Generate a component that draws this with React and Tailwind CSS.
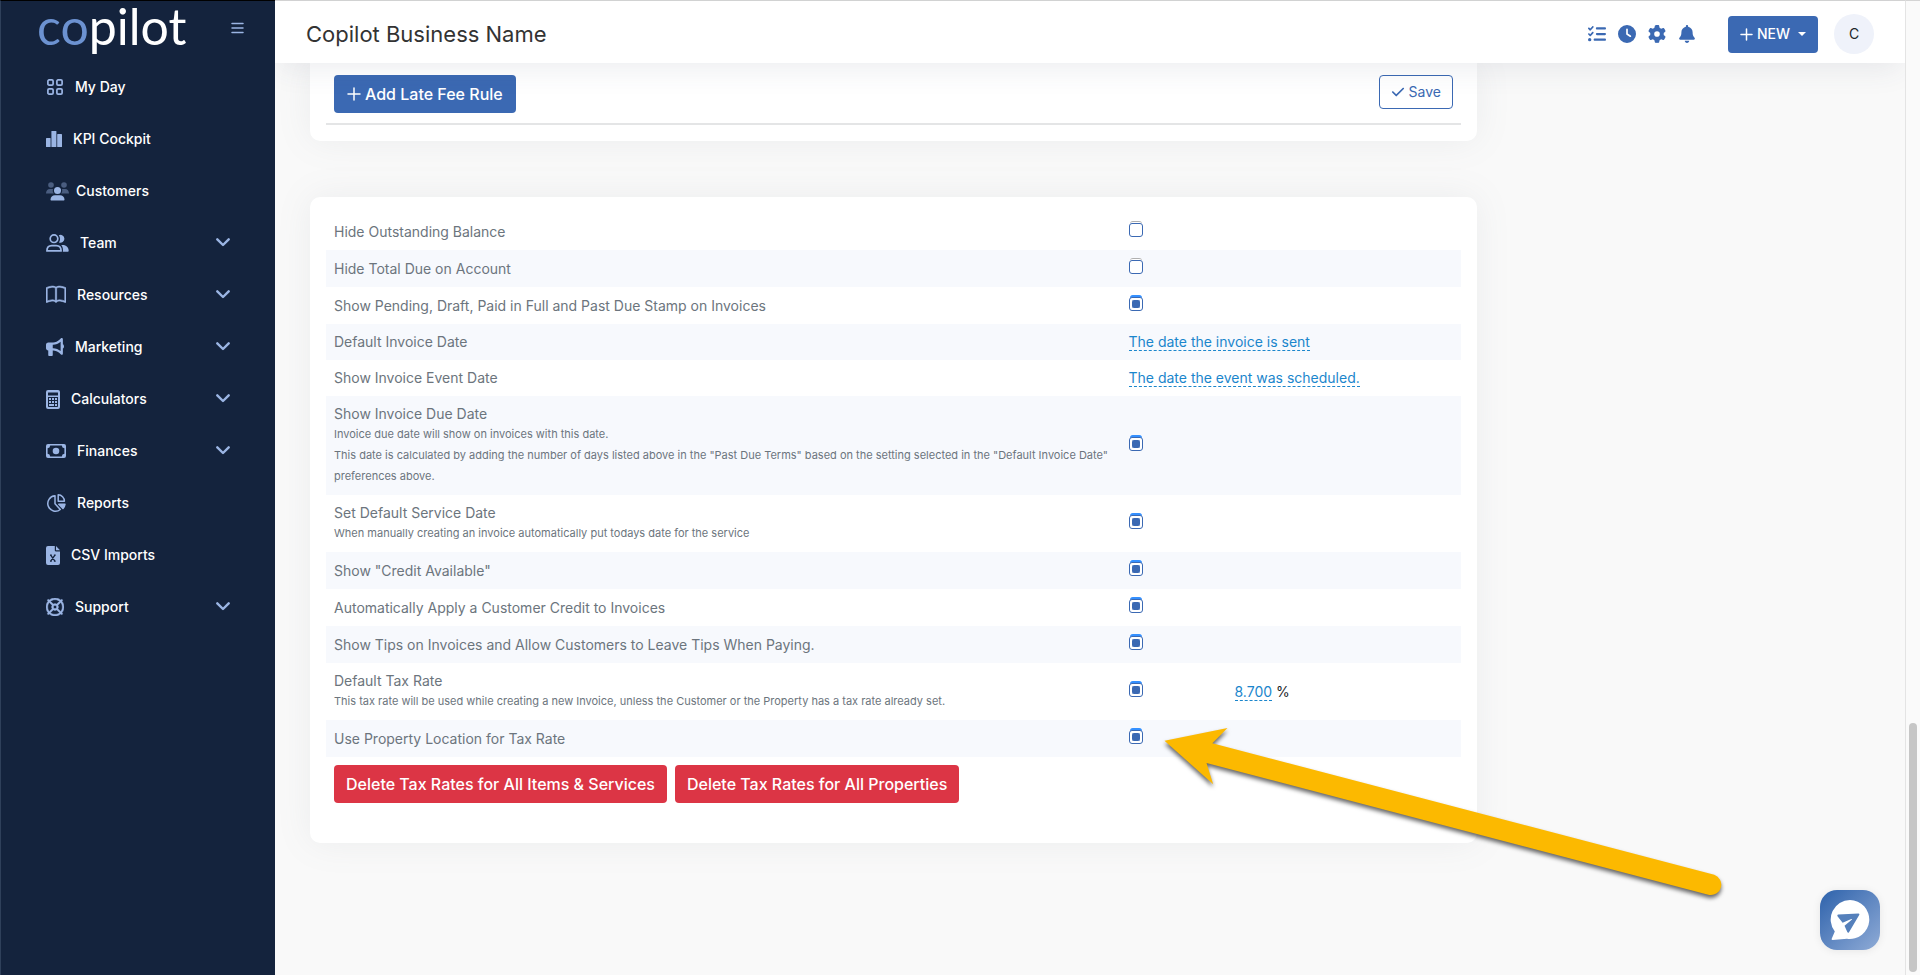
import { FaBell, FaCheck, FaClock, FaListCheck, FaGear, FaBullhorn, FaRegLifeRing } from "react-icons/fa6";
import { BsBook } from "react-icons/bs";

function GridIcon() {
  return (
    <svg width="18" height="18" viewBox="0 0 18 18" fill="none" stroke="currentColor" strokeWidth="1.700">
      <rect x="1.900" y="1.900" width="5.200" height="5.200" rx="1.200" />
      <rect x="10.900" y="1.900" width="5.200" height="5.200" rx="1.200" />
      <rect x="1.900" y="10.900" width="5.200" height="5.200" rx="1.200" />
      <rect x="10.900" y="10.900" width="5.200" height="5.200" rx="1.200" />
    </svg>
  );
}

function BarsIcon() {
  return (
    <svg width="16" height="18" viewBox="0 0 16 18" fill="currentColor">
      <rect x="0" y="8" width="4.6" height="9" rx="0.6" />
      <rect x="5.4" y="1" width="5" height="16" rx="0.6" />
      <rect x="11.2" y="4" width="4.8" height="13" rx="0.6" />
    </svg>
  );
}

function CustomersIcon() {
  return (
    <svg className="-mr-1" width="23" height="19" viewBox="0 0 23 19" fill="currentColor">
      <g opacity="0.4">
        <circle cx="5" cy="3" r="2.8" />
        <circle cx="18" cy="3" r="2.8" />
        <path d="M0 11.5C0 9 1.5 7 4 7h3c-.6 2 0 3.600 1 4.500H.5a.5.5 0 0 1-.5-.5zM23 11.500C23 9 21.500 7 19 7h-3c.6 2 0 3.600-1 4.500h7.500a.5.5 0 0 0 .5-.5z" />
      </g>
      <circle cx="11.500" cy="8.500" r="3.500" />
      <path d="M4.500 17.500c0-2.700 2-4.300 4.500-4.300h5c2.500 0 4.500 1.600 4.500 4.300 0 .6-.4 1-1 1h-12c-.6 0-1-.4-1-1z" />
    </svg>
  );
}

function TeamIcon() {
  return (
    <svg width="23" height="18" viewBox="0 0 23 18" fill="none" stroke="currentColor" strokeWidth="1.7">
      <circle cx="8" cy="4.700" r="3.800" />
      <path d="M.9 16.900c0-3.400 2-5.200 4.900-5.200h4.400c2.900 0 4.900 1.800 4.900 5.200z" strokeLinejoin="round" />
      <path d="M12.800 1.300A3.900 3.900 0 1 1 13 8.400a6.500 6.500 0 0 0-.2-7.100zM15.200 11h1.500c3.600 0 6 2.600 6 5.700 0 .7-.5 1.100-1.200 1.100h-4.700c.5-2.800-.1-5.100-1.600-6.800z" fill="currentColor" stroke="none" />
    </svg>
  );
}

function CalculatorIcon() {
  return (
    <svg width="14" height="19" viewBox="0 0 14 19" fill="currentColor">
      <path fillRule="evenodd" d="M2 0h10a2 2 0 0 1 2 2v15a2 2 0 0 1-2 2H2a2 2 0 0 1-2-2V2a2 2 0 0 1 2-2zm.4 2.400a.4.4 0 0 0-.4.400v2.700h10V2.800a.4.4 0 0 0-.4-.400zM2 7v9.200c0 .4.300.7.700.7h8.600c.4 0 .7-.3.700-.7V7z" />
      <path d="M3 8h2v2H3zm3 0h2v2H6zm3 0h2v2H9zM3 11h2v2H3zm3 0h2v2H6zm3 0h2v2H9zM3 14h5v2H3zm6 0h2v2H9z" />
    </svg>
  );
}

function MoneyIcon() {
  return (
    <svg width="20" height="14" viewBox="0 0 20 14" fill="currentColor">
      <path fillRule="evenodd" d="M2 0h16a2 2 0 0 1 2 2v10a2 2 0 0 1-2 2H2a2 2 0 0 1-2-2V2a2 2 0 0 1 2-2zm2.200 1.600a2.700 2.700 0 0 1-2.600 2.600v5.600a2.700 2.700 0 0 1 2.600 2.600h11.600a2.700 2.700 0 0 1 2.600-2.600V4.200a2.700 2.700 0 0 1-2.600-2.600z" />
      <circle cx="10" cy="7" r="3.300" />
    </svg>
  );
}

function PieIcon() {
  return (
    <svg width="20" height="18" viewBox="0 0 20 18" fill="none" stroke="currentColor" strokeWidth="1.500" strokeLinejoin="round">
      <path d="M9 1.800a7.700 7.700 0 1 0 5.300 13.700L9 9.800z" />
      <path d="M12.200.8v6.400h6.200A6.500 6.500 0 0 0 12.200.8z" />
      <path d="M12.800 10.200h6.200a7.500 7.500 0 0 1-2 4.200z" fill="currentColor" />
    </svg>
  );
}

function FileIcon() {
  return (
    <svg width="14" height="19" viewBox="0 0 14 19" fill="currentColor">
      <path d="M2 0h6.800v4.200c0 .8.500 1.200 1.200 1.200h4V17a2 2 0 0 1-2 2H2a2 2 0 0 1-2-2V2a2 2 0 0 1 2-2z" />
      <path d="M10 0l4 4.200h-4z" />
      <path d="M4.700 9.200l4.200 6M8.900 9.200l-4.200 6M4 9.200h1.800M7.900 9.200h1.800M4 15.200h1.800M7.900 15.200h1.800" stroke="#14233d" strokeWidth="1.300" fill="none" />
    </svg>
  );
}

function Chevron() {
  return (
    <svg className="ml-auto" width="14" height="10" viewBox="0 0 14 10" fill="none" stroke="#9bb5e4" strokeWidth="2.400" strokeLinecap="round" strokeLinejoin="round">
      <path d="M1.300 1.300L7 7L12.700 1.300" />
    </svg>
  );
}

const NAV = [
  { label: "My Day", icon: <GridIcon /> },
  { label: "KPI Cockpit", icon: <BarsIcon /> },
  { label: "Customers", icon: <CustomersIcon /> },
  { label: "Team", icon: <TeamIcon />, more: true },
  { label: "Resources", icon: <BsBook size={20} strokeWidth={0.5} />, more: true },
  { label: "Marketing", icon: <FaBullhorn size={18} />, more: true },
  { label: "Calculators", icon: <CalculatorIcon />, more: true },
  { label: "Finances", icon: <MoneyIcon />, more: true },
  { label: "Reports", icon: <PieIcon /> },
  { label: "CSV Imports", icon: <FileIcon /> },
  { label: "Support", icon: <FaRegLifeRing size={18} strokeWidth={14} />, more: true },
];

const ROWS = [
  { id: "hide-balance", label: "Hide Outstanding Balance", checked: false },
  { id: "hide-total", label: "Hide Total Due on Account", checked: false },
  { id: "stamp", label: "Show Pending, Draft, Paid in Full and Past Due Stamp on Invoices", checked: true },
  { id: "invoice-date", label: "Default Invoice Date", link: "The date the invoice is sent" },
  { id: "event-date", label: "Show Invoice Event Date", link: "The date the event was scheduled." },
  {
    id: "due-date",
    label: "Show Invoice Due Date",
    checked: true,
    notes: [
      "Invoice due date will show on invoices with this date.",
      'This date is calculated by adding the number of days listed above in the "Past Due Terms" based on the setting selected in the "Default Invoice Date" preferences above.',
    ],
  },
  {
    id: "service-date",
    label: "Set Default Service Date",
    checked: true,
    notes: ["When manually creating an invoice automatically put todays date for the service"],
  },
  { id: "credit", label: 'Show "Credit Available"', checked: true },
  { id: "auto-credit", label: "Automatically Apply a Customer Credit to Invoices", checked: true },
  { id: "tips", label: "Show Tips on Invoices and Allow Customers to Leave Tips When Paying.", checked: true },
  {
    id: "tax-rate",
    label: "Default Tax Rate",
    checked: true,
    rate: "8.700",
    notes: ["This tax rate will be used while creating a new Invoice, unless the Customer or the Property has a tax rate already set."],
  },
  { id: "tax-location", label: "Use Property Location for Tax Rate", checked: true },
];

function Checkbox({ id, checked }) {
  return (
    <input
      id={id}
      type="checkbox"
      defaultChecked={checked}
      className="relative block h-4 w-3.5 appearance-none before:absolute before:inset-x-px before:top-0 before:h-1 before:rounded-t-[3px] before:border-t before:border-[#b0b0b0] before:bg-white after:absolute after:inset-x-0 after:bottom-0 after:h-3.5 after:rounded-[3px] after:border after:border-[#3b69b3] after:bg-white checked:before:border-[#3490ff] checked:before:bg-[#3490ff] checked:after:bg-[radial-gradient(circle,#3b69b3_4px,#ffffff_6px)] checked:after:shadow-[inset_0_0_0_2px_#ffffff]"
    />
  );
}

function EditLink({ children }) {
  return (
    <a href="#edit" className="border-b border-dashed border-[#1b86cc] text-[#1b86cc]">
      {children}
    </a>
  );
}

function Sidebar() {
  return (
    <aside className="z-20 w-[275px] shrink-0 border-l border-t border-l-[#2f405a] border-t-black bg-[#14233d]">
      <div className="flex h-[54px] items-center justify-between pl-9 pr-[31px]">
        <a href="#home" className="pb-1 font-['Lato',sans-serif] text-[50px] leading-[50px] text-white">
          <span className="text-[#6c92d1]">co</span>pilot
        </a>
        <button type="button" aria-label="Toggle menu" className="text-[#9bb5e4]">
          <svg width="13" height="12" viewBox="0 0 13 12" stroke="currentColor" strokeWidth="1.500" strokeLinecap="round">
            <path d="M1 1.500h11M1 6h11M1 10.500h11" />
          </svg>
        </button>
      </div>
      <nav className="flex flex-col pt-1.5">
        {NAV.map((item) => (
          <a key={item.label} href="#nav" className="flex h-13 items-center gap-[11px] pl-[45px] pr-[45px] text-sm font-medium text-white">
            <span className="flex text-[#9bb5e4]">{item.icon}</span>
            {item.label}
            {item.more && <Chevron />}
          </a>
        ))}
      </nav>
    </aside>
  );
}

function Header() {
  return (
    <header className="z-10 flex h-[62px] shrink-0 items-center bg-white pl-[31px] pr-[31px] shadow-[0_10px_30px_-5px_rgba(60,65,100,0.10)]">
      <h1 className="grow pt-1 text-[22px] text-[#333333]">Copilot Business Name</h1>
      <div className="flex items-center gap-3 pt-1 text-[#3b69b3]">
        <button type="button" aria-label="Tasks"><FaListCheck size={18} /></button>
        <button type="button" aria-label="Time clock"><FaClock size={18} /></button>
        <button type="button" aria-label="Settings"><FaGear size={18} /></button>
        <button type="button" aria-label="Notifications"><FaBell size={18} /></button>
      </div>
      <button type="button" className="ml-8 mt-1 flex h-[37px] items-center gap-1 rounded bg-[#3b69b3] px-3 text-sm font-medium text-white">
        <svg width="13" height="13" viewBox="0 0 13 13" stroke="currentColor" strokeWidth="1.500" strokeLinecap="round"><path d="M6.500 1v11M1 6.500h11" /></svg>
        NEW
        <svg className="ml-1" width="8" height="4" viewBox="0 0 8 4" fill="currentColor"><path d="M0 0h8L4 4z" /></svg>
      </button>
      <button type="button" className="ml-4 mt-1 h-10 w-10 rounded-full bg-[#eff2fa] text-sm text-[#212529]">C</button>
    </header>
  );
}

function SettingsTable() {
  return (
    <table className="w-full table-fixed text-sm text-[#6c757d]">
      <colgroup>
        <col className="w-[70%]" />
        <col className="w-[106px]" />
        <col />
      </colgroup>
      <tbody>
        {ROWS.map((row) => (
          <tr key={row.id} className="even:bg-[#f7f9fd]">
            <td className="p-2">
              <label htmlFor={row.id} className="block leading-5">{row.label}</label>
              {row.notes && row.notes.map((note) => (
                <p key={note} className="text-[11px] leading-[21px]">{note}</p>
              ))}
            </td>
            {row.link ? (
              <td colSpan={2} className="p-2 leading-5" id={row.id}>
                <EditLink>{row.link}</EditLink>
              </td>
            ) : (
              <>
                <td className="p-2">
                  <div className="h-[21px]"><Checkbox id={row.id} checked={row.checked} /></div>
                </td>
                <td className="p-2 leading-5 text-[#212529]">
                  {row.rate && <><EditLink>{row.rate}</EditLink> %</>}
                </td>
              </>
            )}
          </tr>
        ))}
      </tbody>
    </table>
  );
}

export default function App() {
  return (
    <div className="relative flex h-screen overflow-hidden bg-[#f9f9f9] font-['Inter',sans-serif]">
      <Sidebar />
      <div className="flex min-w-0 grow flex-col border-t border-[#d4d4d4]">
        <Header />
        <main className="grid grow grid-cols-4 content-start gap-3 overflow-hidden px-[35px]">
          <div className="col-span-3 flex flex-col gap-14">
            <section className="rounded-b-[10px] bg-white px-4 pb-4 pt-3 shadow-[0_0_35px_rgba(120,125,135,0.10)]">
              <div className="flex items-start justify-between border-b-2 border-[#e4e5e6] px-2 pb-2.5">
                <button type="button" className="flex h-[38px] items-center gap-1 rounded bg-[#3b69b3] px-[13px] text-base font-medium text-white">
                  <svg width="14" height="14" viewBox="0 0 14 14" stroke="currentColor" strokeWidth="1.500" strokeLinecap="round"><path d="M7 1v12M1 7h12" /></svg>
                  Add Late Fee Rule
                </button>
                <button type="button" className="flex h-[34px] items-center gap-1 rounded border border-[#3b69b3] bg-white px-[11px] text-sm text-[#3b69b3]">
                  <FaCheck size={14} />
                  Save
                </button>
              </div>
            </section>
            <section className="rounded-[10px] bg-white p-4 pb-10 shadow-[0_0_35px_rgba(120,125,135,0.10)]">
              <SettingsTable />
              <div className="flex gap-2 p-2 pb-0">
                <button type="button" className="h-[38px] rounded bg-[#dc3545] px-3 text-base font-medium text-white">
                  Delete Tax Rates for All Items &amp; Services
                </button>
                <button type="button" className="h-[38px] rounded bg-[#dc3545] px-3 text-base font-medium text-white">
                  Delete Tax Rates for All Properties
                </button>
              </div>
            </section>
          </div>
        </main>
      </div>
      <div className="z-20 flex w-[15px] shrink-0 flex-col justify-end border-l border-t border-l-[#e4e4e4] border-t-[#d4d4d4] bg-[#fafafa] px-[3px] pb-[3px]">
        <div className="h-[249px] w-2 rounded-full bg-[#c6c6c6]" />
      </div>

      <svg className="pointer-events-none absolute left-[1155px] top-[720px] z-20 drop-shadow-[0_3px_2px_rgba(0,0,0,0.6)]" width="580" height="190" viewBox="1155 720 580 190">
        <path fill="#fcb900" d="M1164.500 740.700L1227.500 728L1212.300 743.300L1714.300 874.800A10.400 10.400 0 0 1 1709.300 894.900L1206.500 763L1213.200 784.200Z" />
      </svg>

      <button type="button" aria-label="Open chat" className="absolute bottom-[25px] right-10 z-20 flex h-15 w-15 items-center justify-center rounded-[17px] bg-linear-to-br from-[#2d62ab] to-[#8fabd6] shadow-[0_1px_8px_rgba(0,0,0,0.08)]">
        <svg width="40" height="42" viewBox="0 0 40 42">
          <path fill="#ffffff" d="M20 1A19.500 19.500 0 1 1 17 39.800L2.500 41Q1.200 41 1.800 39.600L4.800 32.500A19.500 19.500 0 0 1 20 1z" />
          <path fill="#5580bb" d="M8.200 15.600L28.500 14.400Q30 14.500 29.200 16L19 33.200Q18 34.300 17.300 33L14.500 26.800L22 20.500Q22.300 19.800 21.300 20.100L12.600 23.800L7.500 17.200Q6.800 15.800 8.200 15.600z" />
        </svg>
      </button>
    </div>
  );
}
